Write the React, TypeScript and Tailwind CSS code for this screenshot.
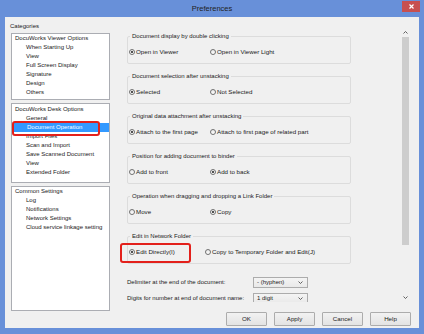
import React from 'react'

type Item = { label: string; header?: boolean; selected?: boolean }

const viewerItems: Item[] = [
  { label: 'DocuWorks Viewer Options', header: true },
  { label: 'When Starting Up' },
  { label: 'View' },
  { label: 'Full Screen Display' },
  { label: 'Signature' },
  { label: 'Design' },
  { label: 'Others' },
]

const deskItems: Item[] = [
  { label: 'DocuWorks Desk Options', header: true },
  { label: 'General' },
  { label: 'Document Operation', selected: true },
  { label: 'Import Files' },
  { label: 'Scan and Import' },
  { label: 'Save Scanned Document' },
  { label: 'View' },
  { label: 'Extended Folder' },
]

const commonItems: Item[] = [
  { label: 'Common Settings', header: true },
  { label: 'Log' },
  { label: 'Notifications' },
  { label: 'Network Settings' },
  { label: 'Cloud service linkage setting' },
]

type Group = { title: string; options: [string, string]; checked: 0 | 1; firstWidth: string }

const groups: Group[] = [
  { title: 'Document display by double clicking', options: ['Open in Viewer', 'Open in Viewer Light'], checked: 0, firstWidth: 'w-[81px]' },
  { title: 'Document selection after unstacking', options: ['Selected', 'Not Selected'], checked: 0, firstWidth: 'w-[81px]' },
  { title: 'Original data attachment after unstacking', options: ['Attach to the first page', 'Attach to first page of related part'], checked: 0, firstWidth: 'w-[81px]' },
  { title: 'Position for adding document to binder', options: ['Add to front', 'Add to back'], checked: 1, firstWidth: 'w-[81px]' },
  { title: 'Operation when dragging and dropping a Link Folder', options: ['Move', 'Copy'], checked: 1, firstWidth: 'w-[81px]' },
  { title: 'Edit in Network Folder', options: ['Edit Directly(I)', 'Copy to Temporary Folder and Edit(J)'], checked: 0, firstWidth: 'w-[76px]' },
]

function ListBox({ items, className }: { items: Item[]; className: string }) {
  return (
    <div className={`bg-white border border-[#abadb3] flex flex-col ${className}`}>
      {items.map((it, i) => (
        <div
          key={i}
          className={`h-[9px] leading-[9px] whitespace-nowrap ${
            it.header ? 'pl-[3px]' : 'pl-[14px]'
          } ${it.selected ? 'bg-[#3399ff] text-white ml-[1px]' : 'text-[#1a1a1a]'}`}
        >
          {it.label}
        </div>
      ))}
    </div>
  )
}

function Radio({ label, checked, className = '' }: { label: string; checked: boolean; className?: string }) {
  return (
    <div className={`flex items-center gap-[1px] h-[8px] whitespace-nowrap ${className}`}>
      <span className="w-[6px] h-[6px] rounded-full border border-[#707070] bg-gradient-to-b from-[#e8e8e8] to-white flex items-center justify-center shrink-0">
        {checked && <span className="w-[2.5px] h-[2.5px] rounded-full bg-[#1a1a1a]" />}
      </span>
      <span className="leading-[8px] text-[6.2px]">{label}</span>
    </div>
  )
}

function Chevron({ up = false }: { up?: boolean }) {
  return (
    <svg width="5" height="3" viewBox="0 0 5 3" className={up ? 'rotate-180' : ''}>
      <path d="M0.5 0.5 L2.5 2.5 L4.5 0.5" fill="none" stroke="#505050" strokeWidth="0.9" />
    </svg>
  )
}

function Select({ value }: { value: string }) {
  return (
    <div className="w-[55px] h-[11px] border border-[#acacac] bg-gradient-to-b from-[#f4f4f4] to-[#e9e9e9] flex items-center justify-between pl-[3px] pr-[4px]">
      <span className="leading-[9px]">{value}</span>
      <Chevron />
    </div>
  )
}

export default function App() {
  return (
    <div className="relative w-[424px] h-[334px] bg-[#6890d9] pt-[17px] px-[5px] pb-[6px] font-['Liberation_Sans',Arial,sans-serif] text-[6px] text-[#1a1a1a] overflow-hidden">
      {/* Title bar */}
      <div className="absolute top-0 left-0 right-0 h-[17px] flex items-center justify-center">
        <span className="text-[7.5px] text-[#222]">Preferences</span>
      </div>
      <div className="absolute top-[1px] right-[4px] w-[18px] h-[11px] bg-[#c75050] flex items-center justify-center">
        <svg width="5" height="5" viewBox="0 0 5 5">
          <path d="M0.5 0.5 L4.5 4.5 M4.5 0.5 L0.5 4.5" stroke="white" strokeWidth="1.2" />
        </svg>
      </div>

      {/* Client area */}
      <div className="w-full h-full bg-[#f0f0f0] flex flex-col">
        <div className="flex h-[294px]">
          {/* Categories */}
          <div className="w-[105px] pl-[6px] pt-[5px] flex flex-col">
            <div className="h-[9px] leading-[9px] mb-[2px] -ml-[1px]">Categories</div>
            <ListBox items={viewerItems} className="h-[67px]" />
            <ListBox items={deskItems} className="h-[80px] mt-[3px] pt-[1px]" />
            <ListBox items={commonItems} className="flex-1 mt-[3px]" />
          </div>

          {/* Settings panel */}
          <div className="ml-[12px] mt-[11px] w-[288px] h-[274px] flex">
            <div className="flex-1 overflow-hidden pl-[5px] pt-[4px]">
              {groups.map((g, i) => (
                <fieldset
                  key={i}
                  className={`w-[224px] border border-[#dcdcdc] rounded-[2px] pl-[1px] pt-[8px] pb-[7px] ${i > 0 ? 'mt-[8px]' : ''}`}
                >
                  <legend className="ml-[1px] px-[2px] leading-[8px] whitespace-nowrap">{g.title}</legend>
                  <div className="flex">
                    <Radio label={g.options[0]} checked={g.checked === 0} className={g.firstWidth} />
                    <Radio label={g.options[1]} checked={g.checked === 1} />
                  </div>
                </fieldset>
              ))}
              <div className="flex items-center mt-[13px] h-[11px]">
                <span className="w-[126px]">Delimiter at the end of the document:</span>
                <Select value="- (hyphen)" />
              </div>
              <div className="flex items-center mt-[5px] h-[11px]">
                <span className="w-[126px]">Digits for number at end of document name:</span>
                <Select value="1 digit" />
              </div>
            </div>

            {/* Scrollbar */}
            <div className="w-[9px] flex flex-col">
              <div className="h-[9px] flex items-center justify-center">
                <Chevron up />
              </div>
              <div className="flex-1 px-[1px]">
                <div className="h-[208px] bg-[#cdcdcd]" />
              </div>
              <div className="h-[9px] flex items-center justify-center">
                <Chevron />
              </div>
            </div>
          </div>
        </div>

        {/* Buttons */}
        <div className="mt-[1px] h-[14px] flex justify-end gap-[7px] pr-[8px]">
          {['OK', 'Apply', 'Cancel', 'Help'].map((b) => (
            <button
              key={b}
              className="w-[41px] h-[14px] border border-[#acacac] rounded-[1px] bg-gradient-to-b from-[#f2f2f2] to-[#e3e3e3] text-[6.2px] leading-[12px] text-[#1a1a1a]"
            >
              {b}
            </button>
          ))}
        </div>
      </div>

      {/* Red annotation frames */}
      <div className="absolute left-[12px] top-[121px] w-[88px] h-[15px] border-2 border-[#e3201b] rounded-[3px]" />
      <div className="absolute left-[120px] top-[243px] w-[71px] h-[20px] border-2 border-[#e3201b] rounded-[3px]" />
    </div>
  )
}
